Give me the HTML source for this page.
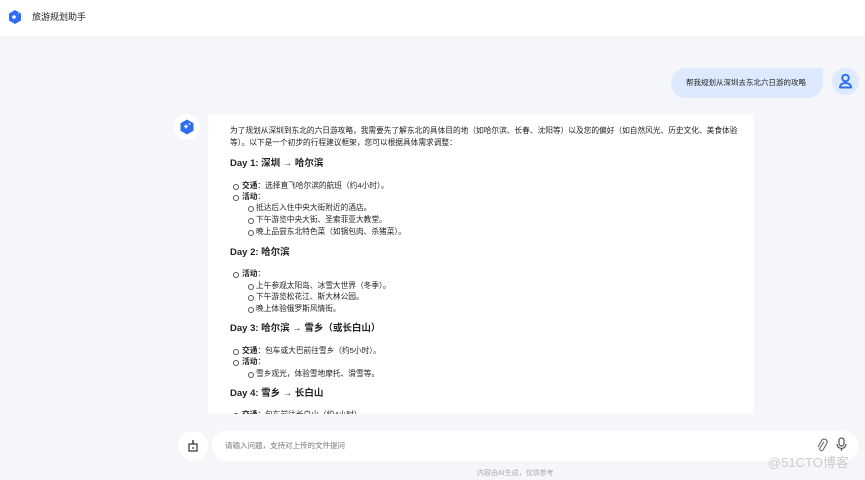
<!DOCTYPE html>
<html><head><meta charset="utf-8"><style>
*{margin:0;padding:0;box-sizing:border-box}
body{width:865px;height:480px;overflow:hidden;background:#f5f6fa;font-family:"Liberation Sans","Noto Sans CJK SC",sans-serif;color:#222;position:relative}
.hdr{position:absolute;left:0;top:0;width:865px;height:36px;background:#fff}
.t{position:absolute;white-space:nowrap;font-size:7.7px;line-height:10px}
.h{font-size:9.5px;font-weight:bold;line-height:12px}
.b1::before,.b2::before{content:"";position:absolute;width:4px;height:4px;border:0.8px solid #555;border-radius:50%;top:3px}
.b1::before{left:-9px}.b2::before{left:-8px}
.card{position:absolute;left:208px;top:114px;width:546px;height:300px;background:#fff;overflow:hidden}
</style></head><body>
<div class="hdr"></div>
<svg style="position:absolute;left:5px;top:7px" width="20" height="20" viewBox="0 0 20 20"><rect width="20" height="20" rx="5" fill="#fff"/><path d="M10 3l6 3.5v7L10 17l-6-3.5v-7z" fill="#2f6df6"/><circle cx="9" cy="10" r="1.8" fill="#fff"/><path d="M13 6l1 1" stroke="#9cc0ff" stroke-width="1"/></svg>
<div class="t" style="left:32px;top:11px;font-size:9px;line-height:12px">旅游规划助手</div>

<div style="position:absolute;left:671px;top:68px;width:152px;height:30px;background:#dce9ff;border-radius:15px 0 15px 15px"></div>
<div class="t" style="left:686px;top:78px;font-size:7.5px">帮我规划从深圳去东北六日游的攻略</div>
<div style="position:absolute;left:832px;top:68px;width:27px;height:27px;border-radius:50%;background:#dce9ff"></div>
<svg style="position:absolute;left:838px;top:73px" width="15" height="16" viewBox="0 0 15 16"><circle cx="7.5" cy="5" r="3.3" fill="none" stroke="#2f6df6" stroke-width="2"/><path d="M2 14.5c0-3 2.5-4.5 5.5-4.5s5.5 1.5 5.5 4.5z" fill="none" stroke="#2f6df6" stroke-width="2" stroke-linejoin="round"/></svg>

<div style="position:absolute;left:174px;top:114px;width:26px;height:26px;border-radius:50%;background:#fff"></div>
<svg style="position:absolute;left:178px;top:118px" width="18" height="18" viewBox="0 0 18 18"><path d="M9 1.5l6.5 3.7v7.6L9 16.5l-6.5-3.7V5.2z" fill="#2f6df6"/><path d="M8 6.5v4M6 8.5h4" stroke="#fff" stroke-width="1.3"/><circle cx="11.5" cy="6" r=".9" fill="#fff"/></svg>

<div class="card"></div>
<div class="t" style="left:230px;top:126px">为了规划从深圳到东北的六日游攻略，我需要先了解东北的具体目的地（如哈尔滨、长春、沈阳等）以及您的偏好（如自然风光、历史文化、美食体验</div>
<div class="t" style="left:230px;top:138px">等）。以下是一个初步的行程建议框架，您可以根据具体需求调整：</div>
<div class="t h" style="left:230px;top:158px">Day 1: 深圳 → 哈尔滨</div>
<div class="t b1" style="left:242px;top:181px"><b>交通</b>：选择直飞哈尔滨的航班（约4小时）。</div>
<div class="t b1" style="left:242px;top:192px"><b>活动</b>：</div>
<div class="t b2" style="left:256px;top:203px">抵达后入住中央大街附近的酒店。</div>
<div class="t b2" style="left:256px;top:215px">下午游览中央大街、圣索菲亚大教堂。</div>
<div class="t b2" style="left:256px;top:227px">晚上品尝东北特色菜（如锅包肉、杀猪菜）。</div>
<div class="t h" style="left:230px;top:247px">Day 2: 哈尔滨</div>
<div class="t b1" style="left:242px;top:269px"><b>活动</b>：</div>
<div class="t b2" style="left:256px;top:281px">上午参观太阳岛、冰雪大世界（冬季）。</div>
<div class="t b2" style="left:256px;top:292px">下午游览松花江、斯大林公园。</div>
<div class="t b2" style="left:256px;top:304px">晚上体验俄罗斯风情街。</div>
<div class="t h" style="left:230px;top:323px">Day 3: 哈尔滨 → 雪乡（或长白山）</div>
<div class="t b1" style="left:242px;top:346px"><b>交通</b>：包车或大巴前往雪乡（约5小时）。</div>
<div class="t b1" style="left:242px;top:357px"><b>活动</b>：</div>
<div class="t b2" style="left:256px;top:369px">雪乡观光，体验雪地摩托、滑雪等。</div>
<div class="t h" style="left:230px;top:388px">Day 4: 雪乡 → 长白山</div>
<div style="position:absolute;left:208px;top:409px;width:546px;height:5px;overflow:hidden"><div class="t b1" style="left:34px;top:1px"><b>交通</b>：包车前往长白山（约4小时）。</div></div>

<div style="position:absolute;left:178px;top:431px;width:30px;height:30px;border-radius:50%;background:#fff"></div>
<svg style="position:absolute;left:187px;top:439px" width="12" height="13" viewBox="0 0 12 13"><rect x="2" y="5" width="8" height="7" fill="none" stroke="#333" stroke-width="1.2"/><path d="M6 1v4" stroke="#333" stroke-width="1.4"/><circle cx="6" cy="9" r=".9" fill="#333"/></svg>
<div style="position:absolute;left:212px;top:431px;width:646px;height:30px;border-radius:15px;background:#fff"></div>
<div class="t" style="left:225px;top:441px;color:#777;font-size:7.5px">请输入问题，支持对上传的文件提问</div>
<svg style="position:absolute;left:816px;top:438px" width="12" height="15" viewBox="0 0 12 15"><path d="M8 4L4 10a1.8 1.8 0 003 2l4-7a3 3 0 00-5-3L2 9" fill="none" stroke="#666" stroke-width="1.1"/></svg>
<svg style="position:absolute;left:836px;top:437px" width="11" height="15" viewBox="0 0 11 15"><rect x="3" y="1" width="5" height="8" rx="2.5" fill="none" stroke="#555" stroke-width="1.2"/><path d="M1 7a4.5 4.5 0 009 0M5.5 11.5v2.5" fill="none" stroke="#555" stroke-width="1.2"/></svg>
<div class="t" style="left:477px;top:469px;color:#aaa;font-size:7px">内容由AI生成，仅供参考</div>
<div class="t" style="left:768px;top:455px;color:#ccc;font-size:13px;line-height:16px">@51CTO博客</div>
</body></html>
